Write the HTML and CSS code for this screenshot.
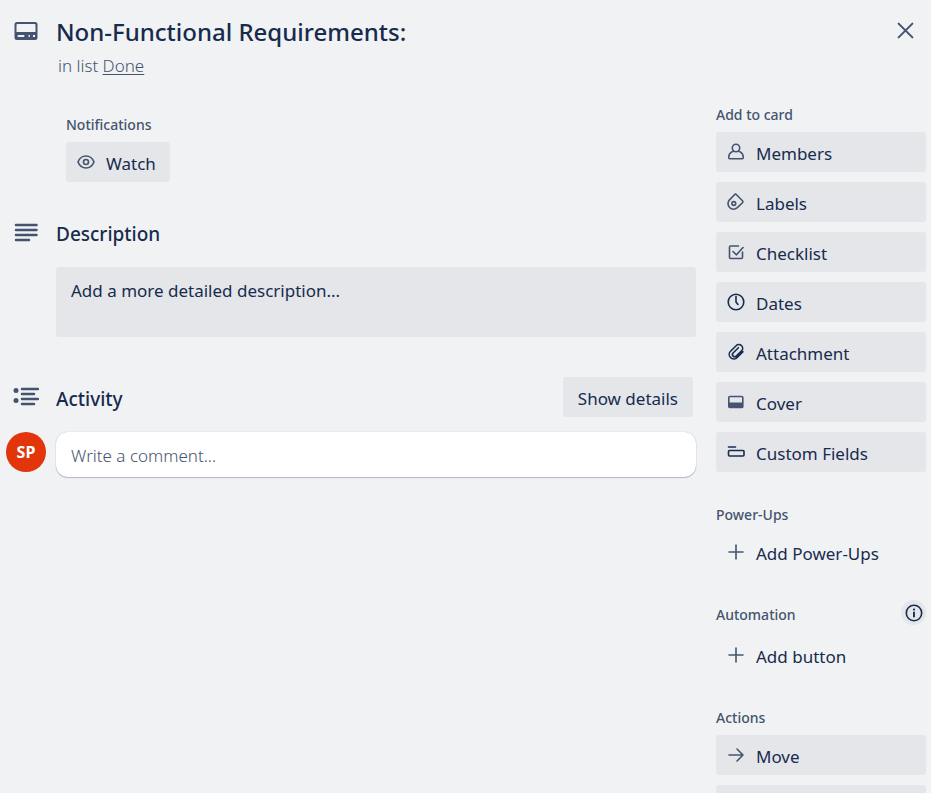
FILE: index.html
```html
<!DOCTYPE html>
<html lang="en">
<head>
<meta charset="utf-8">
<meta name="viewport" content="width=device-width, initial-scale=1">
<title>Non-Functional Requirements:</title>
<link rel="stylesheet" href="styles.css">
</head>
<body>
<div class="card">
  <header class="card-header">
    <div class="gutter gutter-title">
      <svg class="icon-lg" viewBox="0 0 26 26" aria-hidden="true"><path fill-rule="evenodd" d="M4 4h18a2.500 2.500 0 0 1 2.500 2.500v13A2.500 2.500 0 0 1 22 22H4a2.500 2.500 0 0 1-2.500-2.500v-13A2.500 2.500 0 0 1 4 4zm.3 2a.8.8 0 0 0-.8.800V14h19V6.800a.8.800 0 0 0-.8-.8zM5.500 17a1 1 0 0 0 0 2H10.500a1 1 0 0 0 0-2zM15.500 17v1.800h1.500v-1.800zM20 17v2h2v-2z"/></svg>
    </div>
    <div class="card-heading">
      <h1>Non-Functional Requirements:</h1>
      <p class="location">in list <a href="#">Done</a></p>
    </div>
    <button class="close" type="button" aria-label="Close">
      <svg class="icon-close" viewBox="0 0 16 16" aria-hidden="true"><path class="line heavy" d="M1.500 1.500l13 13M14.500 1.500l-13 13"/></svg>
    </button>
  </header>

  <div class="card-body">
    <main class="main">
      <section class="notifications">
        <h3>Notifications</h3>
        <button class="btn btn-watch" type="button">
          <svg class="icon soft" viewBox="0 0 20 20" aria-hidden="true"><path class="line" d="M2 10c1.500-3.800 4.500-6 8-6s6.500 2.200 8 6c-1.500 3.800-4.500 6-8 6s-6.500-2.200-8-6z"/><circle class="line" cx="10" cy="10" r="2.500"/></svg>
          Watch
        </button>
      </section>

      <section class="row description">
        <div class="gutter">
          <svg class="icon-lg" viewBox="0 0 26 26" aria-hidden="true"><path class="bar" d="M3 5h20.500M3 10h20.500M3 15h20.500M3 20h13"/></svg>
        </div>
        <h2>Description</h2>
        <a class="description-box" href="#">Add a more detailed description...</a>
      </section>

      <section class="row activity">
        <div class="gutter">
          <svg class="icon-list" viewBox="0 0 26 24" aria-hidden="true"><circle cx="3" cy="5.500" r="2.500"/><circle cx="3" cy="15.500" r="2.500"/><path class="bar" d="M9 4h16M9 9h12M9 14h16M9 19h12"/></svg>
        </div>
        <div class="activity-head">
          <h2>Activity</h2>
          <button class="btn btn-details" type="button">Show details</button>
        </div>
        <span class="avatar">SP</span>
        <input class="comment" type="text" aria-label="Write a comment" placeholder="Write a comment...">
      </section>
    </main>

    <aside class="sidebar">
      <section>
        <h3>Add to card</h3>
        <div class="stack">
          <button class="btn" type="button"><svg class="icon soft" viewBox="0 0 20 20" aria-hidden="true"><circle class="line" cx="10" cy="6" r="3.700"/><path class="line" d="M7.500 9.300C4.700 10.200 2.700 12.500 2.700 15.400c0 .9.500 1.300 1.200 1.300h12.200c.7 0 1.200-.4 1.200-1.300 0-2.900-2-5.200-4.800-6.100"/></svg>Members</button>
          <button class="btn" type="button"><svg class="icon soft" viewBox="0 0 20 20" aria-hidden="true"><path class="line" d="M2 11.500c0-1.800.5-2.600 1.500-3.600l5-5.200c.6-.6 1.400-.6 2 0l6 6c.6.6.6 1.400 0 2l-5.200 5c-1.100 1-2 1.500-3.800 1.500A5.600 5.600 0 0 1 2 11.500z"/><circle class="line" cx="7.800" cy="11.500" r="1.900"/></svg>Labels</button>
          <button class="btn" type="button"><svg class="icon soft" viewBox="0 0 20 20" aria-hidden="true"><path class="line" d="M12.500 4H4.500a1 1 0 0 0-1 1v10.500a1 1 0 0 0 1 1H15.500a1 1 0 0 0 1-1V10M7 9.500l3.500 3.300L17 5.500"/></svg>Checklist</button>
          <button class="btn" type="button"><svg class="icon" viewBox="0 0 20 20" aria-hidden="true"><circle class="line" cx="10" cy="10" r="7.800"/><path class="line" d="M10 4.500v5.500l2 2.500"/></svg>Dates</button>
          <button class="btn" type="button"><svg class="icon" viewBox="0 0 20 20" aria-hidden="true"><path class="line" d="M17 9.800l-5.800 5.700a4.500 4.500 0 0 1-6.700 0 4.500 4.500 0 0 1 0-6.300l5.600-5.500a3.800 3.800 0 0 1 5.500 0 3.700 3.700 0 0 1 0 5.200l-5.300 5.200a2.200 2.200 0 0 1-3.200 0 2.200 2.200 0 0 1 0-3.100l5.300-5.300"/></svg>Attachment</button>
          <button class="btn" type="button"><svg class="icon soft" viewBox="0 0 20 20" aria-hidden="true"><rect class="line" x="2.800" y="4.500" width="14" height="11" rx="1"/><path d="M3 10.500h14V16H3z"/></svg>Cover</button>
          <button class="btn" type="button"><svg class="icon" viewBox="0 0 20 20" aria-hidden="true"><path class="line" d="M2.500 5h7"/><rect class="line" x="2.500" y="8.500" width="15.500" height="5.500" rx="1"/></svg>Custom Fields</button>
        </div>
      </section>

      <section>
        <h3>Power-Ups</h3>
        <button class="btn btn-plain" type="button"><svg class="icon soft" viewBox="0 0 20 20" aria-hidden="true"><path class="line" d="M10 3v14M3 10h14"/></svg>Add Power-Ups</button>
      </section>

      <section>
        <div class="heading-row">
          <h3>Automation</h3>
          <button class="info" type="button" aria-label="About automation"><svg class="icon" viewBox="0 0 20 20" aria-hidden="true"><circle class="line" cx="10" cy="10" r="7.700"/><path class="line heavy" d="M10 9.500V13.500"/><circle cx="10" cy="6.500" r="1.100"/></svg></button>
        </div>
        <button class="btn btn-plain" type="button"><svg class="icon soft" viewBox="0 0 20 20" aria-hidden="true"><path class="line" d="M10 3v14M3 10h14"/></svg>Add button</button>
      </section>

      <section>
        <h3>Actions</h3>
        <div class="stack">
          <button class="btn" type="button"><svg class="icon soft" viewBox="0 0 20 20" aria-hidden="true"><path class="line" d="M3 10h14M11 4l6 6-6 6"/></svg>Move</button>
          <button class="btn" type="button" aria-label="Copy"></button>
        </div>
      </section>
    </aside>
  </div>
</div>
</body>
</html>
```
FILE: styles.css
```css
* {
  box-sizing: border-box;
}

body {
  margin: 0;
  height: 100vh;
  overflow: hidden;
  background: #f1f2f4;
  color: #172b4d;
  font: 400 17px/24px "Noto Sans", "Open Sans", sans-serif;
}

h1, h2, h3, p {
  margin: 0;
  font-weight: 500;
}

h1 {
  font-size: 24px;
  line-height: 32px;
}

h2 {
  font-size: 19px;
  line-height: 24px;
}

h3 {
  color: #44546f;
  font-size: 14px;
  line-height: 20px;
}

button {
  border: 0;
  font: inherit;
  color: inherit;
  background: none;
  cursor: pointer;
}

svg {
  display: block;
  flex: none;
  fill: currentColor;
}

.line {
  fill: none;
  stroke: currentColor;
  stroke-width: 1.6;
  stroke-linecap: round;
  stroke-linejoin: round;
}

.heavy {
  stroke-width: 1.9;
}

.bar {
  fill: none;
  stroke: currentColor;
  stroke-width: 2.5;
  stroke-linecap: round;
}

.icon {
  width: 20px;
  height: 20px;
}

.icon-lg {
  width: 26px;
  height: 26px;
}

.icon-list {
  width: 26px;
  height: 24px;
}

.icon-close {
  width: 17px;
  height: 17px;
}

.soft, .gutter, .close {
  color: #44546f;
}

.card-header {
  display: flex;
  align-items: flex-start;
  padding: 16px 9px 0 0;
}

.gutter {
  display: flex;
  justify-content: center;
  width: 56px;
  padding-right: 5px;
}

.gutter-title {
  padding-top: 2px;
}

.card-heading {
  flex: 1;
}

.location {
  padding: 6px 2px 0;
  color: #44546f;
  font-weight: 300;
}

.location a {
  color: inherit;
  text-underline-offset: 2px;
}

.close {
  padding: 6px 8px;
}

.card-body {
  display: flex;
  gap: 20px;
  padding: 27px 5px 0 0;
}

.main {
  flex: 1;
}

.notifications {
  padding: 10px 0 0 66px;
}

.notifications h3, .sidebar h3 {
  margin-bottom: 7px;
}

.btn {
  display: flex;
  align-items: center;
  gap: 10px;
  height: 40px;
  padding: 3px 14px 0 10px;
  border-radius: 3px;
  background: #e4e6ea;
}

.btn .icon {
  margin-bottom: 3px;
}

.btn-plain {
  background: none;
}

.row {
  display: grid;
  grid-template-columns: 56px 1fr;
}

.description {
  row-gap: 21px;
  margin-top: 40px;
}

.description .gutter {
  align-items: center;
  height: 22px;
}

.description-box {
  grid-column: 2;
  min-height: 70px;
  padding: 12px 15px;
  border-radius: 3px;
  background: #e4e6ea;
  color: inherit;
  text-decoration: none;
}

.activity {
  row-gap: 15px;
  align-items: center;
  margin-top: 40px;
}

.activity-head {
  display: flex;
  align-items: center;
  justify-content: space-between;
  padding-right: 3px;
}

.activity-head h2 {
  padding-top: 4px;
}

.btn-details {
  padding: 3px 15px 0;
}

.avatar {
  display: grid;
  place-items: center;
  align-self: start;
  width: 40px;
  height: 40px;
  margin-left: 6px;
  border-radius: 50%;
  background: #e2350c;
  color: #fff;
  font-size: 16px;
  font-weight: 700;
}

.comment {
  width: 100%;
  height: 45px;
  padding: 2px 15px 0;
  border: 0;
  border-radius: 12px;
  background: #fff;
  box-shadow: 0 1px 1px #091e4240, 0 0 1px #091e424f;
  color: inherit;
  font: inherit;
}

.comment::placeholder {
  color: #44546f;
  opacity: 1;
  font-weight: 300;
}

.sidebar {
  display: flex;
  flex-direction: column;
  gap: 33px;
  width: 210px;
}

.sidebar .btn {
  width: 100%;
}

.stack {
  display: grid;
  gap: 10px;
}

.heading-row {
  display: flex;
  align-items: flex-start;
  justify-content: space-between;
  margin-bottom: 3px;
}

.info {
  display: grid;
  place-items: center;
  width: 25px;
  height: 25px;
  margin-top: -5px;
  padding: 0;
  border-radius: 50%;
  background: #e4e6ea;
}
```
